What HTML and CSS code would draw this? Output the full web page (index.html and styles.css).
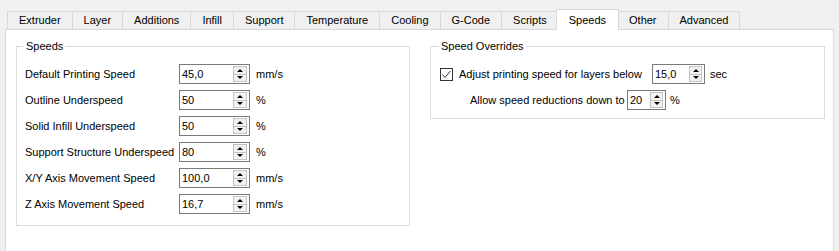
FILE: index.html
```html
<!DOCTYPE html>
<html lang="en">
<head>
  <meta charset="UTF-8">
  <title>Printer Settings - Speeds</title>
  <link rel="stylesheet" href="styles.css">
</head>
<body>
  <div class="tabs">
    <div class="tab">Extruder</div>
    <div class="tab">Layer</div>
    <div class="tab">Additions</div>
    <div class="tab">Infill</div>
    <div class="tab">Support</div>
    <div class="tab">Temperature</div>
    <div class="tab">Cooling</div>
    <div class="tab">G-Code</div>
    <div class="tab">Scripts</div>
    <div class="tab active">Speeds</div>
    <div class="tab">Other</div>
    <div class="tab">Advanced</div>
  </div>

  <div class="panel">
    <fieldset class="group group-speeds">
      <legend>Speeds</legend>
      <div class="form">
        <label>Default Printing Speed</label>
        <div class="spin"><span class="spin-value">45,0</span><span class="spin-btns"><span class="up"></span><span class="down"></span></span></div>
        <span class="unit">mm/s</span>

        <label>Outline Underspeed</label>
        <div class="spin"><span class="spin-value">50</span><span class="spin-btns"><span class="up"></span><span class="down"></span></span></div>
        <span class="unit">%</span>

        <label>Solid Infill Underspeed</label>
        <div class="spin"><span class="spin-value">50</span><span class="spin-btns"><span class="up"></span><span class="down"></span></span></div>
        <span class="unit">%</span>

        <label>Support Structure Underspeed</label>
        <div class="spin"><span class="spin-value">80</span><span class="spin-btns"><span class="up"></span><span class="down"></span></span></div>
        <span class="unit">%</span>

        <label>X/Y Axis Movement Speed</label>
        <div class="spin"><span class="spin-value">100,0</span><span class="spin-btns"><span class="up"></span><span class="down"></span></span></div>
        <span class="unit">mm/s</span>

        <label>Z Axis Movement Speed</label>
        <div class="spin"><span class="spin-value">16,7</span><span class="spin-btns"><span class="up"></span><span class="down"></span></span></div>
        <span class="unit">mm/s</span>
      </div>
    </fieldset>

    <fieldset class="group group-overrides">
      <legend>Speed Overrides</legend>
      <div class="line">
        <span class="check">
          <svg width="13" height="13" viewBox="0 0 13 13">
            <rect x="0.5" y="0.5" width="12" height="12" fill="#fff" stroke="#333"/>
            <polyline points="2.5,6.5 5,9.5 10.5,3" fill="none" stroke="#333" stroke-width="1"/>
          </svg>
        </span>
        <span class="line-label adjust">Adjust printing speed for layers below</span>
        <div class="spin spin-sec"><span class="spin-value">15,0</span><span class="spin-btns"><span class="up"></span><span class="down"></span></span></div>
        <span class="unit unit-sec">sec</span>
      </div>
      <div class="line">
        <span class="line-label allow">Allow speed reductions down to</span>
        <div class="spin spin-pct"><span class="spin-value">20</span><span class="spin-btns"><span class="up"></span><span class="down"></span></span></div>
        <span class="unit unit-pct">%</span>
      </div>
    </fieldset>
  </div>
</body>
</html>
```

FILE: styles.css
```css
body {
  margin: 0;
  height: 251px;
  overflow: hidden;
  background: #f0f0f0;
  color: #000;
  font-family: "Liberation Sans", Arial, sans-serif;
  font-size: 11px;
}

/* tab bar */
.tabs {
  display: flex;
  align-items: flex-end;
  padding: 9px 0 0 7px;
}

.tab {
  box-sizing: border-box;
  height: 18px;
  line-height: 17px;
  padding: 0 11px;
  border: 1px solid #d9d9d9;
  border-bottom: none;
  background: #f0f0f0;
  white-space: nowrap;
}

.tab + .tab {
  margin-left: -1px;
}

.tab.active {
  position: relative;
  z-index: 1;
  height: 21px;
  line-height: 20px;
  margin: 0 -2px -1px -3px;
  padding: 0 12px;
  background: #fff;
}

.tab.active + .tab {
  margin-left: 0;
}

/* page */
.panel {
  box-sizing: border-box;
  display: flex;
  align-items: flex-start;
  gap: 20px;
  height: 223px;
  margin: 0 5px;
  padding: 10px 8px 0 10px;
  border: 1px solid #d9d9d9;
  background: #fff;
}

.group {
  flex: 1;
  min-width: 0;
  margin: 0;
  border: 1px solid #dcdcdc;
}

.group legend {
  margin-left: -1px;
  padding: 0 2px;
  line-height: 13px;
}

.group-speeds {
  padding: 11px 8px 11px 8px;
}

.group-overrides {
  padding: 11px 8px 8px 9px;
}

.form {
  display: grid;
  grid-template-columns: 154px 71px auto;
  row-gap: 6px;
  align-items: center;
}

.unit {
  margin-left: 6px;
}

/* spin boxes */
.spin {
  box-sizing: border-box;
  display: flex;
  height: 20px;
  border: 1px solid #7a7a7a;
  background: #fff;
}

.spin-value {
  flex: 1;
  padding-left: 2px;
  line-height: 18px;
}

.spin-btns {
  display: flex;
  flex-direction: column;
  width: 14px;
  margin: 1px 2px 1px 0;
}

.spin-btns span {
  box-sizing: border-box;
  flex: 1;
  display: flex;
  align-items: center;
  justify-content: center;
  border: 1px solid #c4c4c4;
  background: #f2f2f2;
}

.spin-btns .down {
  border-top: none;
}

.spin-btns .up::after,
.spin-btns .down::after {
  content: "";
  width: 0;
  height: 0;
  border-left: 3px solid transparent;
  border-right: 3px solid transparent;
}

.spin-btns .up::after {
  border-bottom: 3px solid #000;
}

.spin-btns .down::after {
  border-top: 3px solid #000;
}

/* overrides */
.line {
  display: flex;
  align-items: center;
}

.line + .line {
  margin-top: 6px;
}

.check {
  display: flex;
  width: 13px;
  height: 13px;
}

.adjust {
  width: 193px;
  margin-left: 6px;
}

.allow {
  width: 157px;
  margin-left: 30px;
}

.spin-sec {
  width: 53px;
}

.spin-pct {
  width: 39px;
}

.spin-sec .spin-btns,
.spin-pct .spin-btns {
  width: 13px;
}

.unit-sec {
  margin-left: 5px;
}

.unit-pct {
  margin-left: 4px;
}
```
